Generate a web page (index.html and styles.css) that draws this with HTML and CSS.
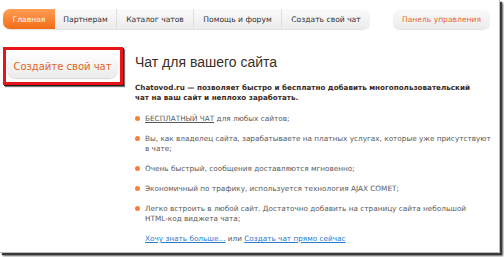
FILE: index.html
```html
<!DOCTYPE html>
<html lang="ru">
<head>
<meta charset="utf-8">
<title>Chatovod</title>
<link rel="stylesheet" href="styles.css">
</head>
<body>
<div class="frame">
  <div class="topbar">
    <nav class="tabs">
      <a class="tab active w1">Главная</a>
      <a class="tab w2">Партнерам</a>
      <a class="tab w3">Каталог чатов</a>
      <a class="tab w4">Помощь и форум</a>
      <a class="tab w5 last">Создать свой чат</a>
    </nav>
    <a class="panel-btn">Панель управления</a>
  </div>
  <div class="body">
    <aside class="side">
      <div class="highlight">
        <a class="create-btn">Создайте свой чат</a>
      </div>
    </aside>
    <main class="main">
      <h1 class="title">Чат для вашего сайта</h1>
      <p class="lead">Chatovod.ru — позволяет быстро и бесплатно добавить многопользовательский<br>чат на ваш сайт и неплохо заработать.</p>
      <ul class="features">
        <li><span class="u">БЕСПЛАТНЫЙ ЧАТ</span> для любых сайтов;</li>
        <li>Вы, как владелец сайта, зарабатываете на платных услугах, которые уже присутствуют<br>в чате;</li>
        <li>Очень быстрый, сообщения доставляются мгновенно;</li>
        <li>Экономичный по трафику, используется технология AJAX COMET;</li>
        <li>Легко встроить в любой сайт. Достаточно добавить на страницу сайта небольшой<br>HTML-код виджета чата;</li>
      </ul>
      <p class="more"><a class="link">Хочу знать больше...</a> или <a class="link">Создать чат прямо сейчас</a></p>
    </main>
  </div>
</div>
</body>
</html>
```

FILE: styles.css
```css
html, body {
  margin: 0;
  padding: 0;
  background: #fff;
}
body {
  font-family: "DejaVu Sans", Verdana, sans-serif;
  width: 504px;
  height: 257px;
  overflow: hidden;
}
.frame {
  box-sizing: border-box;
  width: 500px;
  height: 253px;
  background: #fff;
  border-right: 1px solid #bbb;
  border-bottom: 1px solid #bbb;
  box-shadow: 2px 2px 1px #3a3a3a, 3px 3px 2px #666;
  padding: 9px 0 0 3px;
  overflow: hidden;
}
.topbar {
  display: flex;
  align-items: flex-start;
  height: 20px;
}
.tabs {
  display: flex;
  height: 20px;
  border-radius: 7px;
  background: linear-gradient(#fbfbfb, #ebebeb);
  box-shadow: 0 1px 1px #e2e2e2;
}
.tab {
  box-sizing: border-box;
  flex: none;
  display: flex;
  align-items: center;
  justify-content: center;
  white-space: nowrap;
  font-size: 7.6px;
  color: #333;
  border-right: 1px solid #dedede;
}
.w1 { width: 52px; }
.w2 { width: 62px; }
.w3 { width: 77px; }
.w4 { width: 88px; }
.w5 { width: 88px; }
.tab.last { border-right: 0; }
.tab.active {
  color: #fff;
  background: linear-gradient(#ff9d55, #f26c16);
  border-radius: 7px 0 0 7px;
  border-right: 0;
}
.panel-btn {
  box-sizing: border-box;
  margin-left: 23px;
  width: 97px;
  height: 20px;
  display: flex;
  align-items: center;
  justify-content: center;
  white-space: nowrap;
  font-size: 7.6px;
  color: #e8692a;
  border-radius: 7px;
  background: linear-gradient(#fbfbfb, #ebebeb);
  box-shadow: 0 1px 1px #e2e2e2;
}
.body {
  display: flex;
  margin-top: 18px;
}
.side {
  width: 132px;
  flex: none;
}
.highlight {
  box-sizing: border-box;
  width: 120px;
  height: 38px;
  border: 3px solid #e8141a;
  box-shadow: 1px 1px 0 #222, 2px 2px 1px #777;
  padding: 4px 0 0 1px;
}
.create-btn {
  display: flex;
  align-items: center;
  justify-content: center;
  width: 111px;
  height: 24px;
  border-radius: 9px;
  background: linear-gradient(#fdfdfd, #ebebeb);
  box-shadow: 0 1px 1px #d4d4d4;
  color: #e06520;
  font-size: 10px;
  white-space: nowrap;
}
.main {
  flex: 1;
  color: #5a5a5a;
  white-space: nowrap;
}
.title {
  margin: 7px 0 0;
  font-family: "Liberation Sans", Arial, sans-serif;
  font-size: 14px;
  font-weight: normal;
  color: #3b2f25;
  line-height: 16px;
}
.lead {
  margin: 13px 0 0;
  font-size: 7.2px;
  font-weight: bold;
  color: #3b2a1e;
  line-height: 10px;
}
.features {
  list-style: none;
  margin: 11px 0 0;
  padding: 0;
  font-size: 7.3px;
  line-height: 10px;
}
.features li {
  position: relative;
  padding-left: 10px;
  margin-bottom: 10px;
}
.features li::before {
  content: "";
  position: absolute;
  left: 0;
  top: 2px;
  width: 5px;
  height: 5px;
  border-radius: 50%;
  background: #f6823a;
}
.u { text-decoration: underline; }
.more {
  margin: 0 0 0 10px;
  font-size: 7.3px;
  line-height: 10px;
}
.link {
  color: #2a7ad0;
  text-decoration: underline;
}
```
